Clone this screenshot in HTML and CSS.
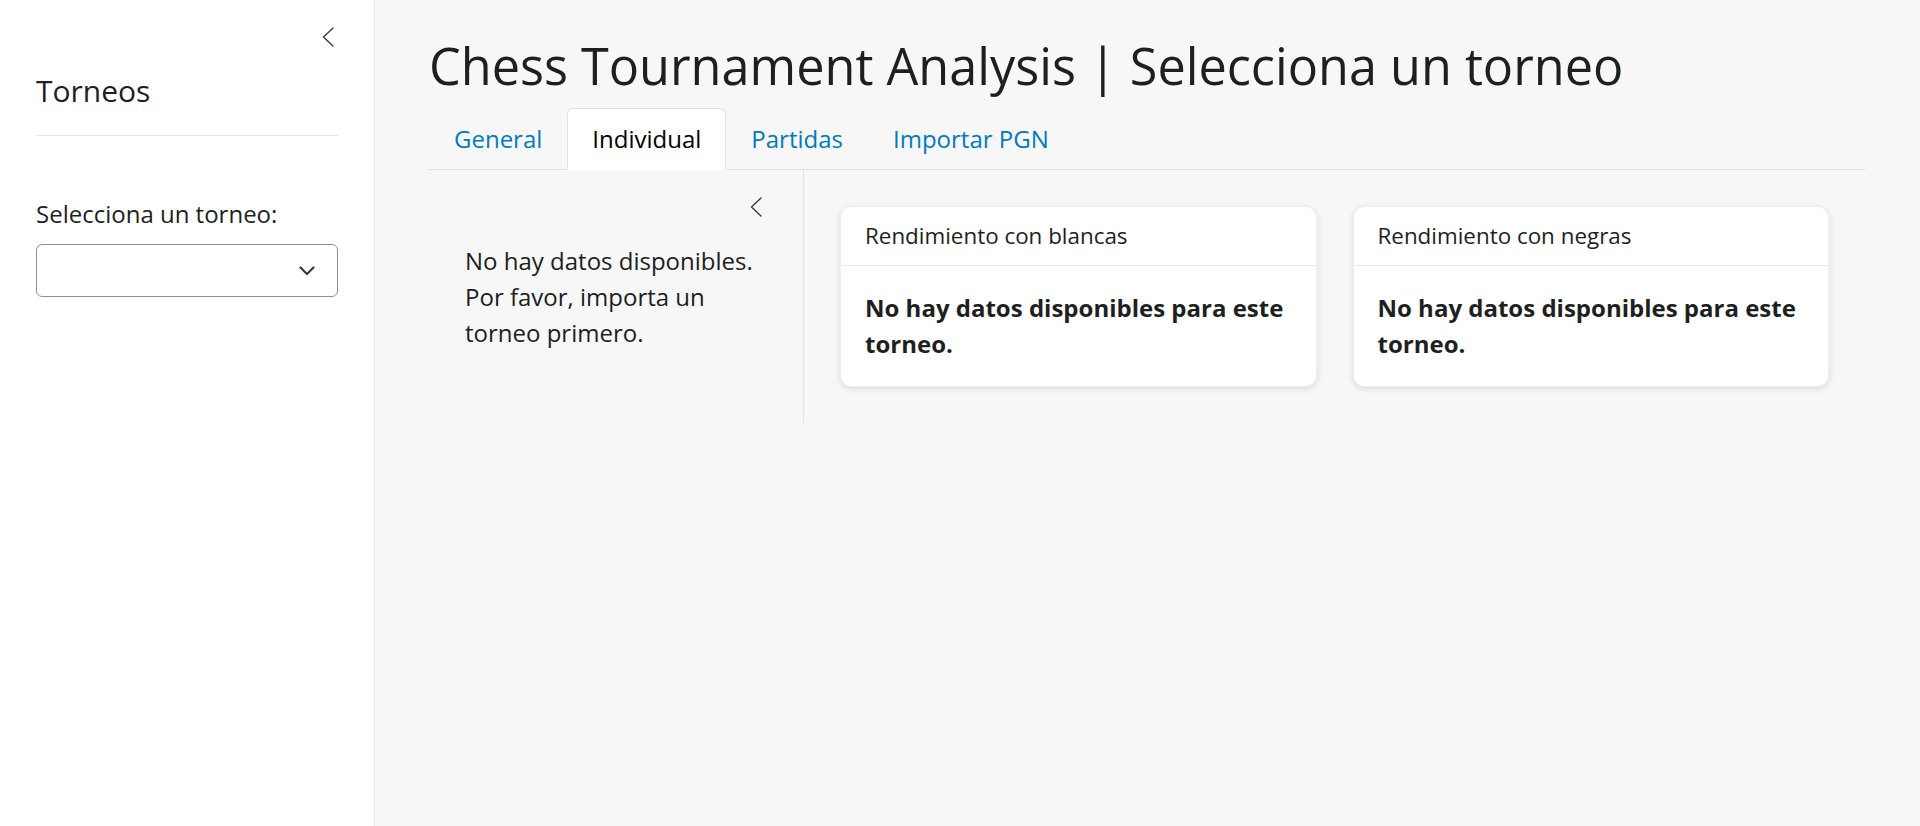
FILE: index.html
```html
<!DOCTYPE html>
<html lang="es">
<head>
<meta charset="utf-8">
<title>Chess Tournament Analysis</title>
<link rel="stylesheet" href="styles.css">
</head>
<body>
<div class="app">
  <aside class="sidebar">
    <div class="toggle-row">
      <svg class="chev" width="12" height="20" viewBox="0 0 12 20" aria-hidden="true"><polyline points="11,1 1.5,10 11,19" fill="none" stroke="#3a3d40" stroke-width="1.4" stroke-linecap="round" stroke-linejoin="round"/></svg>
    </div>
    <h2 class="sidebar-title">Torneos</h2>
    <label class="field-label">Selecciona un torneo:</label>
    <div class="select">
      <svg width="16" height="10" viewBox="0 0 16 10" aria-hidden="true"><polyline points="1.5,1.5 8,8 14.5,1.5" fill="none" stroke="#343a40" stroke-width="2.2" stroke-linecap="round" stroke-linejoin="round"/></svg>
    </div>
  </aside>
  <main class="main">
    <h1 class="title">Chess Tournament Analysis | Selecciona un torneo</h1>
    <nav class="tabs">
      <a class="tab">General</a>
      <a class="tab active">Individual</a>
      <a class="tab">Partidas</a>
      <a class="tab">Importar PGN</a>
    </nav>
    <section class="layout">
      <div class="inner-sidebar">
        <div class="toggle-row">
          <svg class="chev" width="12" height="20" viewBox="0 0 12 20" aria-hidden="true"><polyline points="11,1 1.5,10 11,19" fill="none" stroke="#3a3d40" stroke-width="1.4" stroke-linecap="round" stroke-linejoin="round"/></svg>
        </div>
        <p class="note">No hay datos disponibles. Por favor, importa un torneo primero.</p>
      </div>
      <div class="content">
        <div class="cards">
          <div class="card">
            <div class="card-header">Rendimiento con blancas</div>
            <div class="card-body"><strong>No hay datos disponibles para este torneo.</strong></div>
          </div>
          <div class="card">
            <div class="card-header">Rendimiento con negras</div>
            <div class="card-body"><strong>No hay datos disponibles para este torneo.</strong></div>
          </div>
        </div>
      </div>
    </section>
  </main>
</div>
</body>
</html>
```
FILE: styles.css
```css
* { box-sizing: border-box; }
html, body { margin: 0; padding: 0; }
body {
  font-family: "Open Sans", "Noto Sans", "Liberation Sans", sans-serif;
  font-size: 24px;
  line-height: 1.5;
  color: #1d1f21;
  background: #f7f7f7;
}
.app {
  display: grid;
  grid-template-columns: 375px 1fr;
  height: 100vh;
}
.sidebar {
  background: #fff;
  border-right: 1px solid #ebebeb;
  padding: 0 36px 36px;
}
.toggle-row {
  display: flex;
  justify-content: flex-end;
  padding-top: 27px;
  padding-right: 4px;
  height: 47px;
}
.chev { display: block; }
.sidebar-title {
  margin: 26px 0 0;
  font-size: 30px;
  font-weight: 400;
  line-height: 1.2;
  padding-bottom: 26px;
  border-bottom: 1px solid #e6e6e6;
}
.field-label {
  display: block;
  margin-top: 60px;
  margin-bottom: 12px;
}
.select {
  height: 53px;
  border: 1px solid #8c9197;
  border-radius: 6px;
  background: #fff;
  display: flex;
  align-items: center;
  justify-content: flex-end;
  padding-right: 22px;
}
.select svg { display: block; }
.main {
  padding: 36px 55px 0 54px;
  min-width: 0;
}
.title {
  margin: 0 0 12px;
  font-size: 50.4px;
  font-weight: 400;
  line-height: 60px;
  color: #1d1f21;
}
.tabs {
  display: flex;
  border-bottom: 1px solid #dee2e6;
}
.tab {
  padding: 12px 24px;
  border: 1px solid transparent;
  border-radius: 6px 6px 0 0;
  margin-bottom: -1px;
  color: #007bc2;
  cursor: pointer;
}
.tab.active {
  background: #fff;
  color: #000;
  border-color: #dee2e6 #dee2e6 #fff;
}
.layout {
  display: grid;
  grid-template-columns: 375px 1fr;
}
.inner-sidebar {
  border-right: 1px solid #e3e3e3;
  padding: 0 37px 36px 36px;
}
.note {
  margin: 26px 0 0;
}
.content {
  padding: 36px;
}
.cards {
  display: grid;
  grid-template-columns: 1fr 1fr;
  gap: 36px;
  align-items: start;
}
.card {
  background: #fff;
  border: 1px solid rgba(0, 0, 0, 0.06);
  border-radius: 12px;
  box-shadow: 0 2px 6px rgba(0, 0, 0, 0.13);
  overflow: hidden;
}
.card-header {
  padding: 12px 24px;
  font-size: 22.4px;
  line-height: 34px;
  font-weight: 500;
  border-bottom: 1px solid #ebebeb;
}
.card-body {
  padding: 24px;
}
.card-body strong { font-weight: 700; }
```
